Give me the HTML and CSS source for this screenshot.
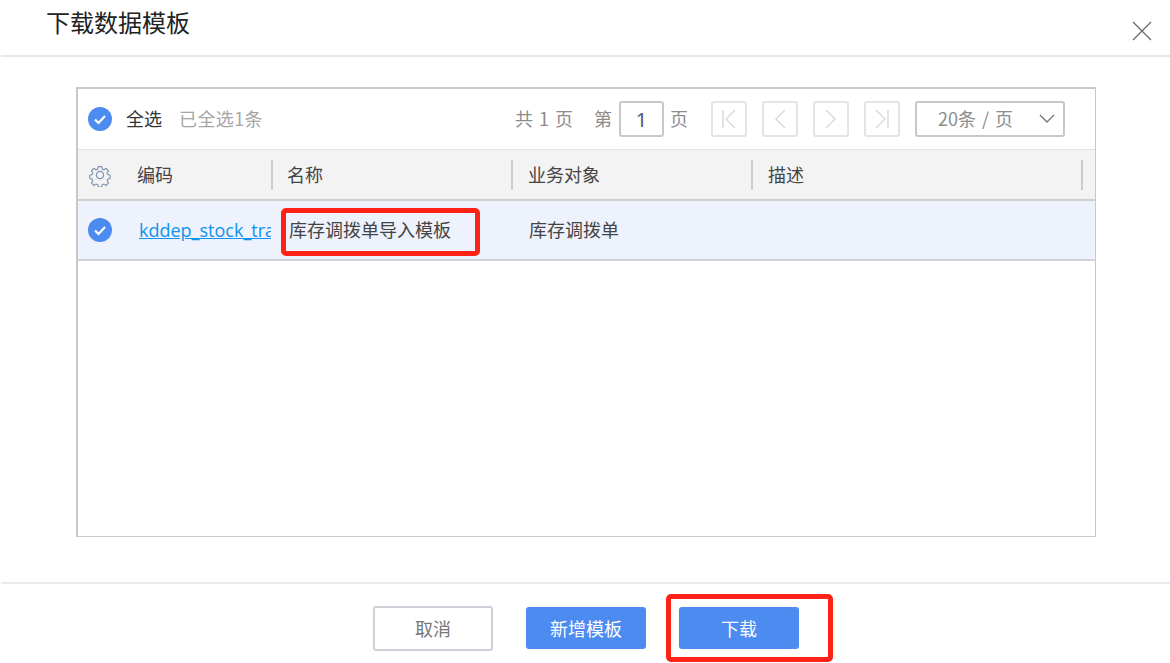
FILE: index.html
```html
<!DOCTYPE html>
<html lang="zh">

<head>
    <meta charset="UTF-8">
    <title>下载数据模板</title>
    <link rel="stylesheet" href="styles.css">
</head>

<body>
    <main class="dialog">
        <header class="dialogHead">
            <h1>下载数据模板</h1>
            <svg class="closeIcon" width="20" height="20" viewBox="0 0 20 20">
                <path d="M1 1L19 19M19 1L1 19" stroke="#666" stroke-width="1.2" fill="none" />
            </svg>
        </header>

        <section class="listBox">
            <div class="toolbar">
                <div class="selectInfo">
                    <svg class="check" width="24" height="24" viewBox="0 0 24 24">
                        <circle cx="12" cy="12" r="12" fill="#4c8bf0" />
                        <path d="M7 12.5L10.5 16L17 9" stroke="#fff" stroke-width="2.2" fill="none" />
                    </svg>
                    <span class="selectAll">全选</span>
                    <span class="selected">已全选1条</span>
                </div>
                <div class="pager">
                    <span class="pageTotal">共 1 页</span>
                    <span class="pageAt">第</span>
                    <input class="pageInput" type="text" value="1">
                    <span class="pageOf">页</span>
                    <div class="pageBtns">
                        <span class="pageBtn">
                            <svg width="18" height="24" viewBox="0 0 18 24"><path d="M3 3V21M15 3L6 12L15 21" stroke="#d8d8d8" stroke-width="1.4" fill="none" /></svg>
                        </span>
                        <span class="pageBtn">
                            <svg width="18" height="24" viewBox="0 0 18 24"><path d="M14 3L5 12L14 21" stroke="#d8d8d8" stroke-width="1.4" fill="none" /></svg>
                        </span>
                        <span class="pageBtn">
                            <svg width="18" height="24" viewBox="0 0 18 24"><path d="M4 3L13 12L4 21" stroke="#d8d8d8" stroke-width="1.4" fill="none" /></svg>
                        </span>
                        <span class="pageBtn">
                            <svg width="18" height="24" viewBox="0 0 18 24"><path d="M15 3V21M3 3L12 12L3 21" stroke="#d8d8d8" stroke-width="1.4" fill="none" /></svg>
                        </span>
                    </div>
                    <div class="pageSize">
                        <span>20条 / 页</span>
                        <svg width="16" height="10" viewBox="0 0 16 10"><path d="M1 1L8 8L15 1" stroke="#777" stroke-width="1.4" fill="none" /></svg>
                    </div>
                </div>
            </div>

            <div class="gridRow gridHead">
                <div class="cellCheck">
                    <svg width="24" height="24" viewBox="0 0 24 24">
                        <path d="M10 2.5h4l.6 2.8 1.9.8 2.4-1.6 2.8 2.8-1.6 2.4.8 1.9 2.6.6v4l-2.6.6-.8 1.9 1.6 2.4-2.8 2.8-2.4-1.6-1.9.8-.6 2.6h-4l-.6-2.6-1.9-.8-2.4 1.6-2.8-2.8 1.6-2.4-.8-1.9-2.6-.6v-4l2.6-.6.8-1.9-1.6-2.4 2.8-2.8 2.4 1.6 1.9-.8z" transform="translate(1.4 1.4) scale(.88)" stroke="#8094b4" stroke-width="1.3" fill="none" />
                        <circle cx="12" cy="12" r="3.6" stroke="#8094b4" stroke-width="1.3" fill="none" />
                    </svg>
                </div>
                <div class="cell cellCode">编码</div>
                <div class="cell cellName">名称</div>
                <div class="cell cellObj">业务对象</div>
                <div class="cell cellDesc">描述</div>
            </div>

            <div class="gridRow gridBody">
                <div class="cellCheck">
                    <svg width="24" height="24" viewBox="0 0 24 24">
                        <circle cx="12" cy="12" r="12" fill="#4c8bf0" />
                        <path d="M7 12.5L10.5 16L17 9" stroke="#fff" stroke-width="2.2" fill="none" />
                    </svg>
                </div>
                <div class="cell cellCode"><a href="#">kddep_stock_tra</a></div>
                <div class="cell cellName">库存调拨单导入模板</div>
                <div class="cell cellObj">库存调拨单</div>
                <div class="cell cellDesc"></div>
            </div>
        </section>

        <footer class="dialogFoot">
            <button class="btn btnGhost">取消</button>
            <button class="btn">新增模板</button>
            <button class="btn">下载</button>
        </footer>

        <div class="mark markName"></div>
        <div class="mark markDownload"></div>
    </main>
</body>

</html>
```

FILE: styles.css
```css
html,
body {
    margin: 0px;
    padding: 0px;
    background-color: #fff;
}

body {
    font-family: "Noto Sans CJK SC", sans-serif;
    font-size: 18px;
    color: #444;
}

.dialog {
    position: relative;
    width: 1170px;
    height: 663px;
    overflow: hidden;
}

.dialogHead {
    display: flex;
    justify-content: space-between;
    height: 55px;
    margin-left: 1px;
    padding: 0px 18px 0px 45px;
    border-bottom: 2px solid #e8e8e8;
}

.dialogHead h1 {
    margin: 0px;
    font-size: 24px;
    font-weight: 400;
    line-height: 44px;
    color: #222;
}

.closeIcon {
    margin-top: 21px;
}

.listBox {
    width: 1017px;
    height: 447px;
    margin: 30px 0px 0px 76px;
    border: 2px solid #c8c8c8;
    border-right-width: 1px;
    border-bottom-width: 1px;
}

.toolbar {
    display: flex;
    justify-content: space-between;
    align-items: center;
    height: 60px;
    padding: 0px 30px 0px 10px;
    border-bottom: 1px solid #e2e2e2;
}

.selectInfo,
.pager,
.pageBtns,
.pageSize {
    display: flex;
    align-items: center;
}

.toolbar span {
    padding-bottom: 3px;
}

.toolbar .pageBtn {
    padding-bottom: 0px;
}

.check {
    margin-bottom: 1px;
}

.selectAll {
    margin-left: 14px;
    color: #333;
}

.selected {
    margin-left: 17px;
    letter-spacing: 0.4px;
    color: #a6a6a6;
}

.pager {
    color: #8c8c8c;
}

.pageTotal {
    word-spacing: 2px;
}

.pageAt {
    margin-left: 21px;
}

.pageInput {
    box-sizing: border-box;
    width: 45px;
    height: 36px;
    margin: 0px 6px 0px 7px;
    padding: 0px;
    border: 2px solid #c8c8c8;
    border-radius: 3px;
    font-family: "Noto Sans", sans-serif;
    font-size: 20px;
    text-align: center;
    color: #4a5a70;
}

.pageBtns {
    gap: 15px;
    margin-left: 23px;
}

.pageBtn {
    box-sizing: border-box;
    display: flex;
    justify-content: center;
    align-items: center;
    width: 36px;
    height: 36px;
    border: 2px solid #e4e4e4;
    border-radius: 3px;
}

.pageSize {
    box-sizing: border-box;
    justify-content: space-between;
    width: 150px;
    height: 36px;
    margin-left: 15px;
    padding: 0px 8px 0px 21px;
    border: 2px solid #c8c8c8;
    border-radius: 3px;
    word-spacing: 2px;
}

.gridRow {
    display: flex;
    align-items: center;
}

.gridHead {
    height: 49px;
    background-color: #f3f3f3;
    border-bottom: 2px solid #cfcfcf;
}

.gridBody {
    height: 58px;
    background-color: #edf2fc;
    border-bottom: 2px solid #cfd2d8;
}

.cellCheck {
    display: flex;
    align-items: center;
    width: 46px;
    padding-left: 10px;
    flex-shrink: 0;
}

.cell {
    box-sizing: border-box;
    flex-shrink: 0;
    overflow: hidden;
    white-space: nowrap;
}

.gridHead .cell {
    height: 30px;
    line-height: 28px;
    border-right: 2px solid #c8ccd4;
}

.gridBody .cell {
    padding-bottom: 2px;
}

.cellCode {
    width: 139px;
    padding-left: 3px;
}

.gridBody .cellCode {
    width: 137px;
    padding-left: 5px;
    margin-right: 2px;
}

.cellName {
    width: 240px;
    padding-left: 14px;
}

.gridBody .cellName {
    padding-left: 16px;
}

.cellObj {
    width: 240px;
    padding-left: 15px;
}

.gridBody .cellObj {
    padding-left: 16px;
}

.cellDesc {
    width: 330px;
    padding-left: 15px;
}

.cellCode a {
    font-family: "Open Sans", sans-serif;
    color: #0f93ee;
}

.dialogFoot {
    display: flex;
    justify-content: center;
    align-items: center;
    gap: 33px;
    height: 60px;
    margin: 45px 0px 0px 1px;
    padding-left: 1px;
    padding-top: 14px;
    border-top: 2px solid #e8e8ee;
}

.btn {
    box-sizing: border-box;
    width: 120px;
    height: 42px;
    padding: 0px;
    border: none;
    border-radius: 3px;
    background-color: #4c8bf0;
    font-family: inherit;
    font-size: 18px;
    color: #fff;
}

.btnGhost {
    height: 45px;
    border: 2px solid #ccd0d8;
    background-color: #fff;
    color: #777;
}

.mark {
    position: absolute;
    box-sizing: border-box;
    border: 5px solid #ff2216;
    border-radius: 5px;
}

.markName {
    left: 281px;
    top: 208px;
    width: 199px;
    height: 48px;
}

.markDownload {
    left: 666px;
    top: 594px;
    width: 167px;
    height: 68px;
}
```
